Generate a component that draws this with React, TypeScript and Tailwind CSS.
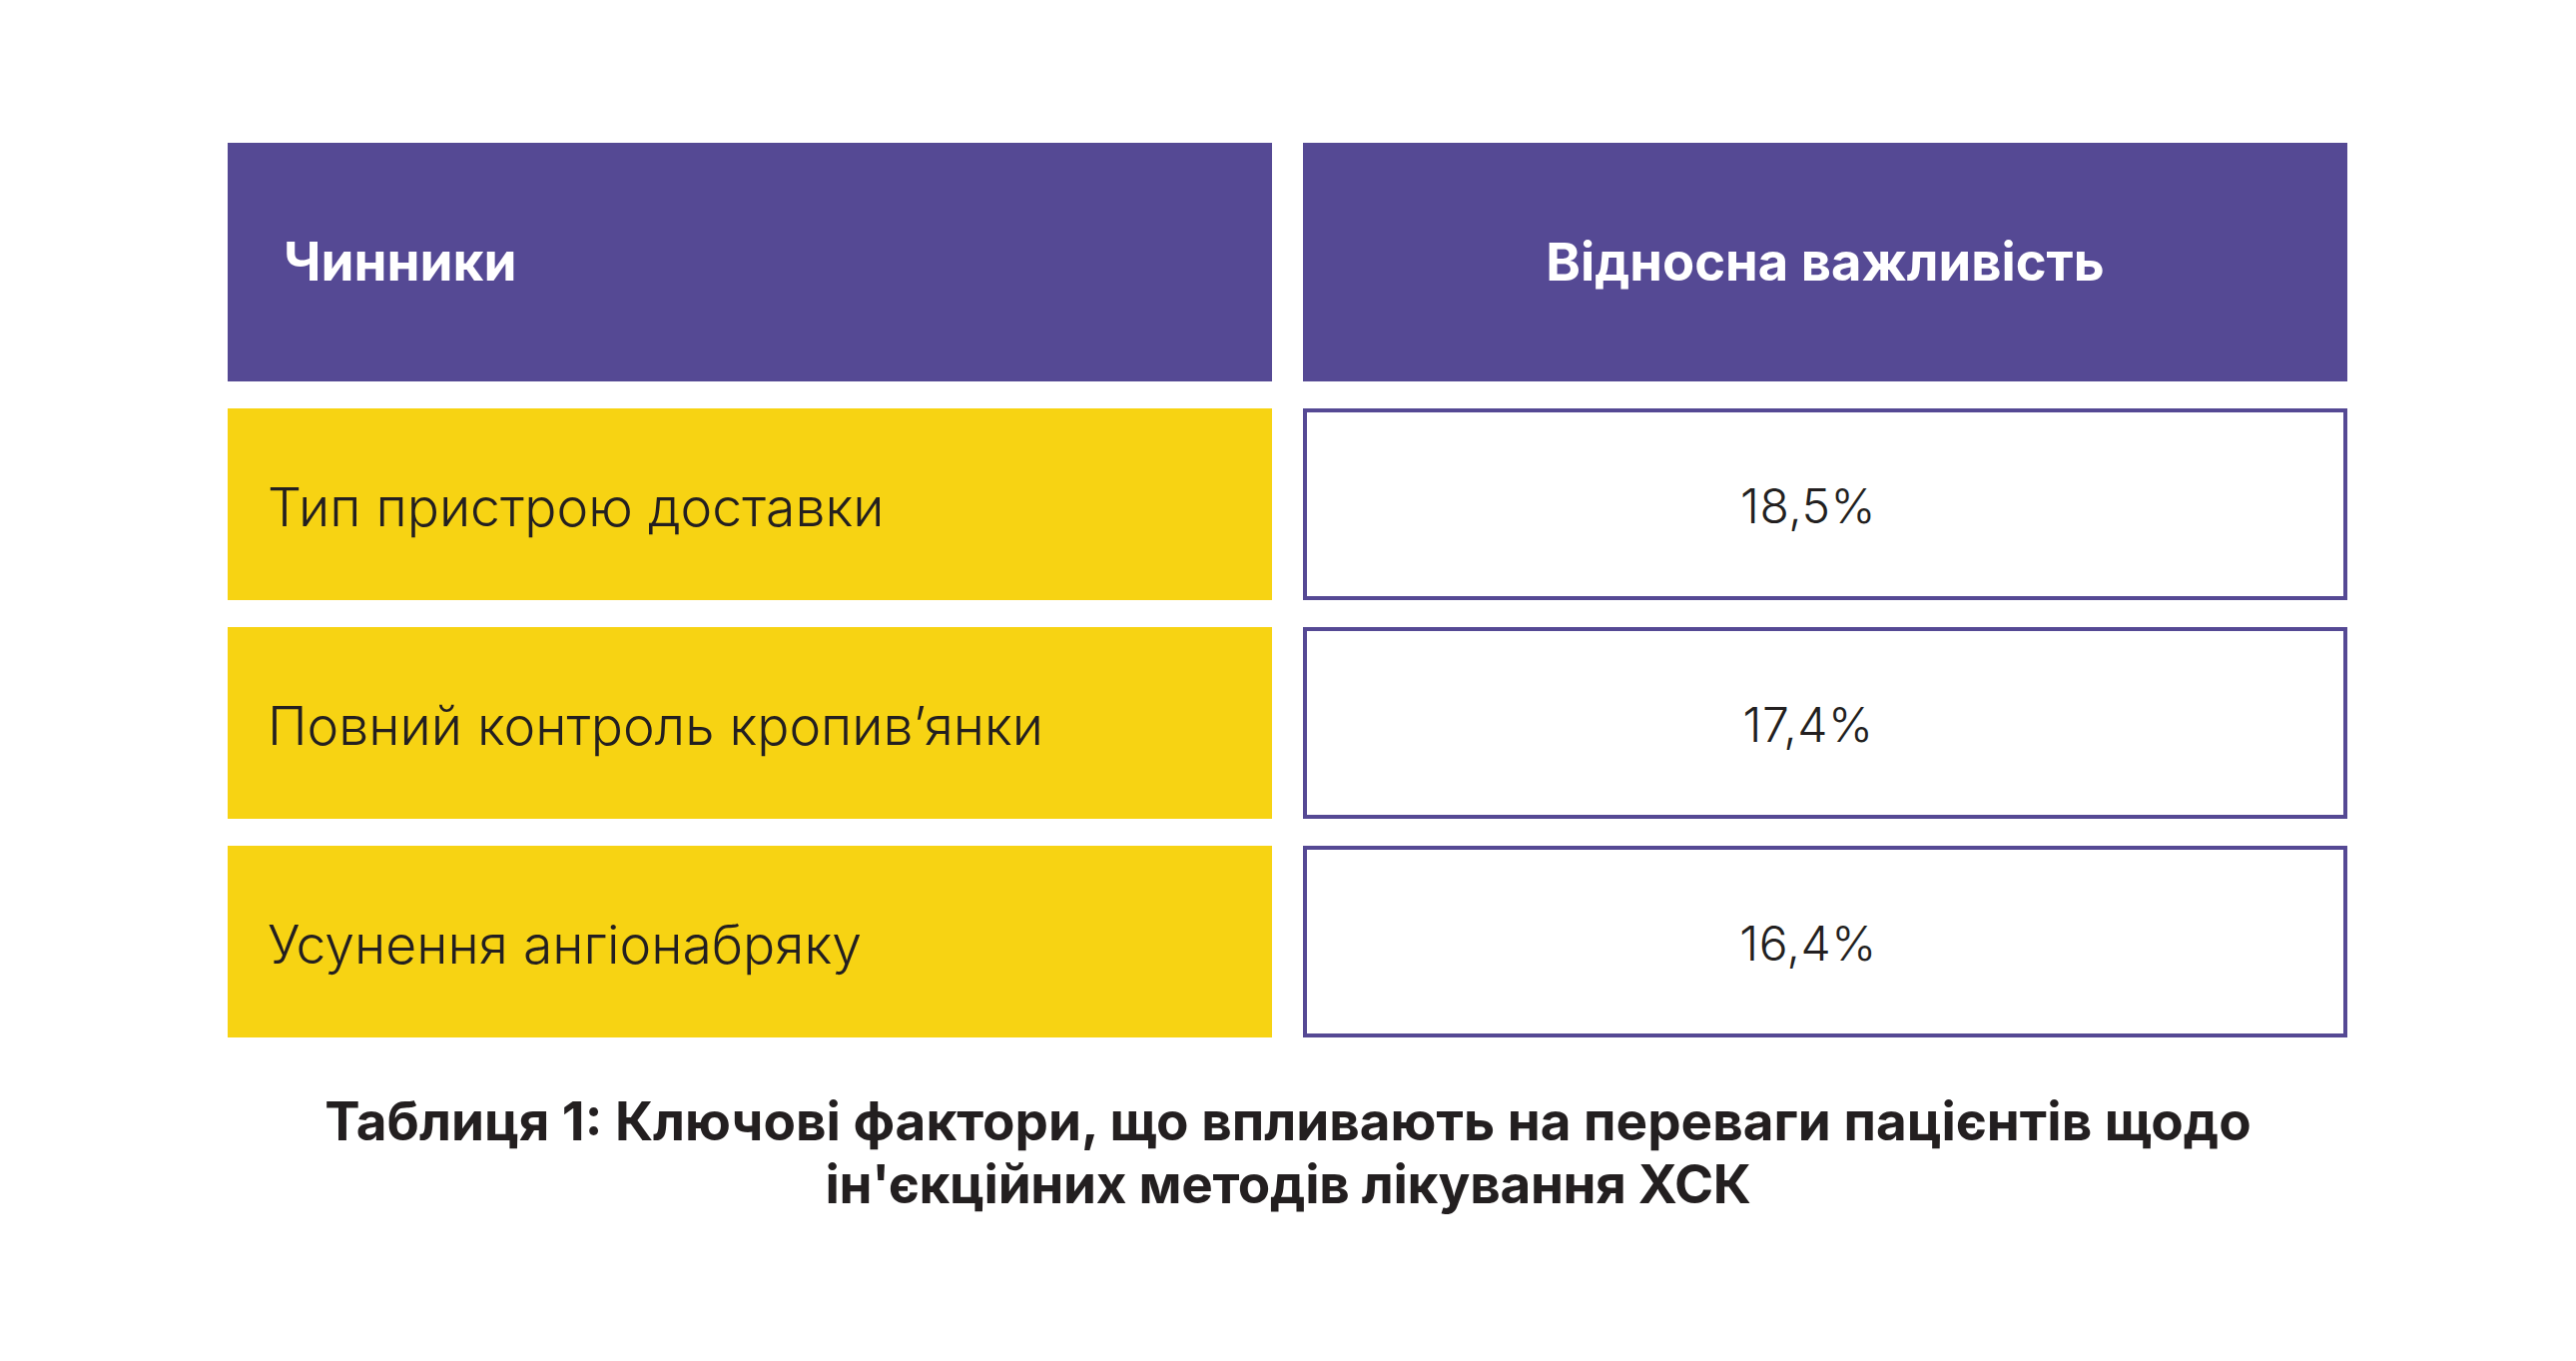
import React from "react";

const rows = [
  { label: "Тип пристрою доставки", value: "18,5%" },
  { label: "Повний контроль кропив’янки", value: "17,4%" },
  { label: "Усунення ангіонабряку", value: "16,4%" },
];

export default function App() {
  return (
    <div
      className="w-[2580px] h-[1363px] bg-white overflow-hidden"
      style={{ fontFamily: "Inter, 'Noto Sans', sans-serif" }}
    >
      <div className="ml-[228px] pt-[143px] w-[2123px]">
        <div className="grid grid-cols-2 gap-x-[31px] gap-y-[27px] grid-rows-[239px_192px_192px_192px]">
          <div className="bg-[#554994] flex items-center pl-[56px]">
            <span className="text-white font-bold text-[53px] leading-none">Чинники</span>
          </div>
          <div className="bg-[#554994] flex items-center justify-center">
            <span className="text-white font-bold text-[52.5px] leading-none">Відносна важливість</span>
          </div>
          {rows.map((r) => (
            <React.Fragment key={r.label}>
              <div className="bg-[#f7d313] flex items-center pl-[40px] pt-[5px]">
                <span className="text-[#231f20] font-light text-[53.5px] leading-none">{r.label}</span>
              </div>
              <div className="border-[4px] border-[#554994] bg-white flex items-center justify-center pr-[34px] pt-[4px]">
                <span className="text-[#231f20] font-light text-[48px] leading-none tracking-[0.5px]">{r.value}</span>
              </div>
            </React.Fragment>
          ))}
        </div>
      </div>
      <div className="mt-[53px] text-center text-[#231f20] font-bold text-[53px] leading-[63px]">
        Таблиця 1: Ключові фактори, що впливають на переваги пацієнтів щодо
        <br />
        <span className="tracking-[-0.3px]">ін'єкційних методів лікування ХСК</span>
      </div>
    </div>
  );
}
